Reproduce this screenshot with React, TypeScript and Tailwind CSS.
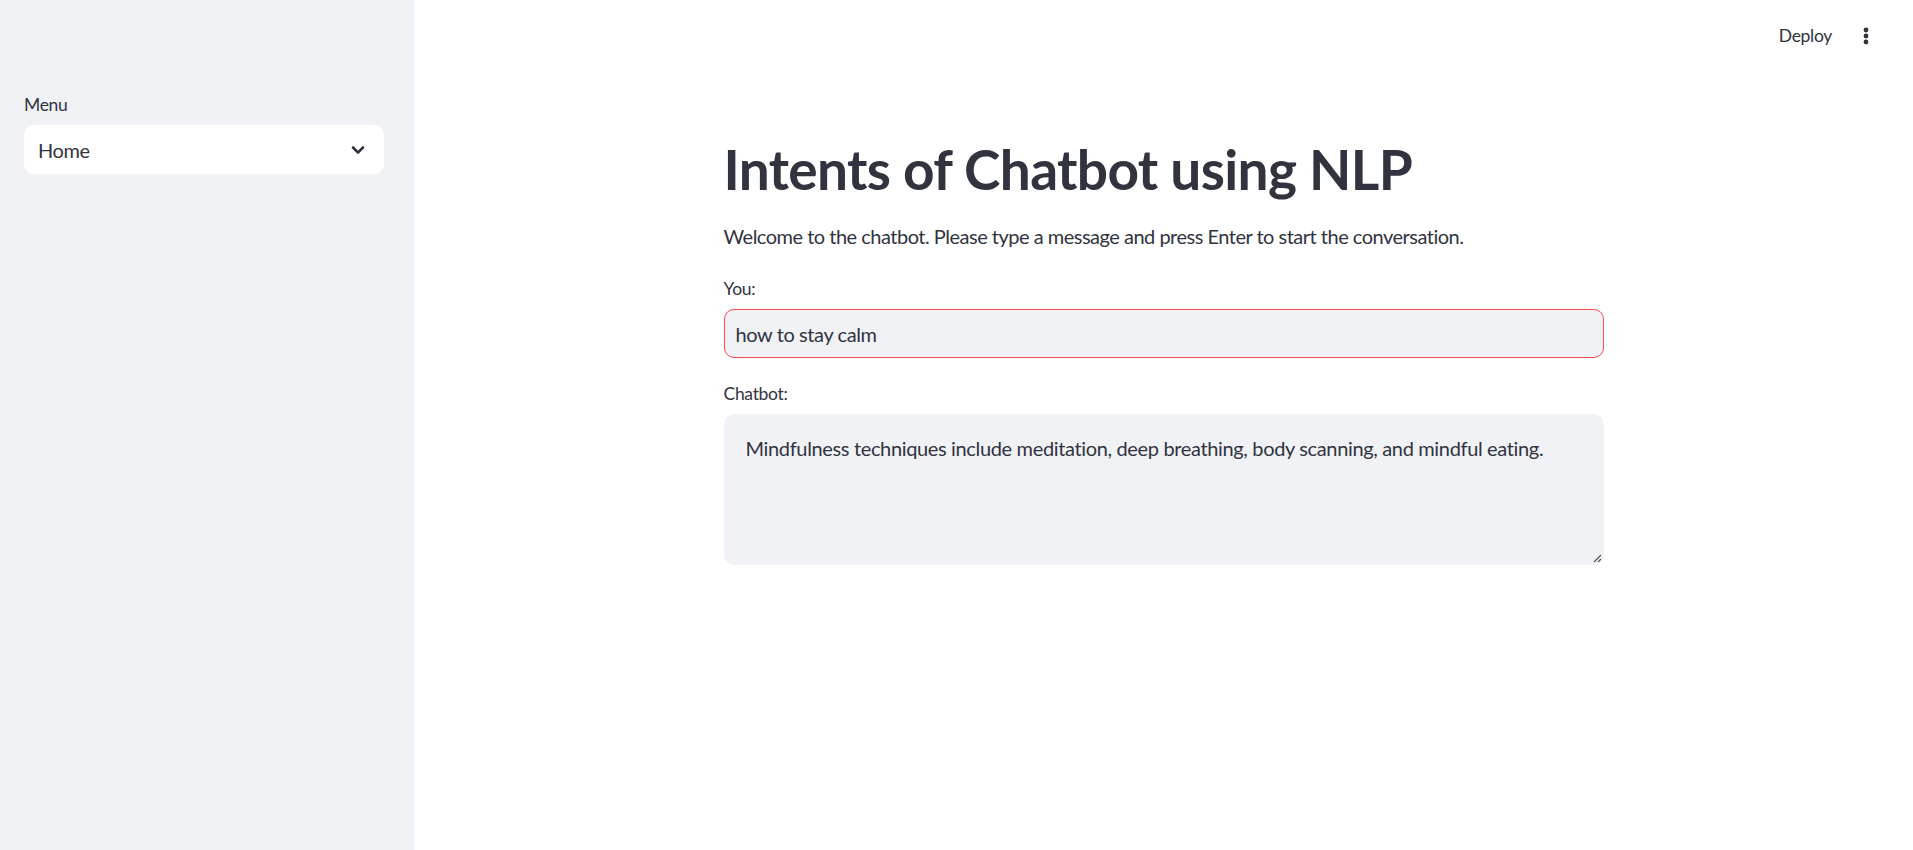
import React from "react";

export default function App() {
  return (
    <div className="flex h-[850px] w-full bg-white text-[#31333F] font-['Lato',sans-serif] tracking-[-0.4px]">
      <aside className="w-[414px] shrink-0 bg-[#f0f2f6] pl-[24px] pr-[30px] pt-[94px]">
        <div className="text-[17.5px] leading-[22px] mb-[9px] tracking-[-0.3px]">Menu</div>
        <div className="flex h-[49px] items-center justify-between rounded-[10px] bg-white pl-[14px] pr-[19px]">
          <span className="text-[20px]">Home</span>
          <svg width="14" height="10" viewBox="0 0 14 10" className="text-[#31333F]">
            <path d="M2 2.5 L7 7.5 L12 2.5" fill="none" stroke="currentColor" strokeWidth="2.6" strokeLinecap="round" strokeLinejoin="round" />
          </svg>
        </div>
      </aside>
      <main className="relative flex-1">
        <header className="flex h-[72px] items-center justify-end pr-[44px] gap-[31px]">
          <span className="text-[17.5px] tracking-[-0.3px]">Deploy</span>
          <svg width="6" height="18" viewBox="0 0 6 18">
            <circle cx="3" cy="3" r="2.4" fill="#31333F" />
            <circle cx="3" cy="9" r="2.4" fill="#31333F" />
            <circle cx="3" cy="15" r="2.4" fill="#31333F" />
          </svg>
        </header>
        <div className="mx-auto w-[920px] px-[20px] pt-[64px]">
          <h1 className="text-[55px] font-bold leading-[66px] tracking-[-0.65px]">Intents of Chatbot using NLP</h1>
          <p className="mt-[19px] text-[20px] leading-[30px] tracking-[-0.5px]">
            Welcome to the chatbot. Please type a message and press Enter to start the conversation.
          </p>
          <div className="mt-[27px] text-[17.5px] leading-[22px] tracking-[-0.3px]">You:</div>
          <div className="mt-[9px] flex h-[49px] items-center rounded-[10px] border border-[#ff4b4b] bg-[#f0f2f6] px-[11px]">
            <span className="text-[20px]">how to stay calm</span>
          </div>
          <div className="mt-[25px] text-[17.5px] leading-[22px] tracking-[-0.3px]">Chatbot:</div>
          <div className="relative mt-[9px] h-[151px] rounded-[10px] bg-[#f0f2f6] px-[22px] pt-[19px]">
            <span className="text-[20px] leading-[30px] tracking-[-0.35px]">
              Mindfulness techniques include meditation, deep breathing, body scanning, and mindful eating.
            </span>
            <svg className="absolute bottom-[2px] right-[2px]" width="10" height="10" viewBox="0 0 10 10">
              <path d="M9 2 L2 9 M9 6 L6 9" stroke="#555" strokeWidth="1.2" />
            </svg>
          </div>
        </div>
      </main>
    </div>
  );
}
